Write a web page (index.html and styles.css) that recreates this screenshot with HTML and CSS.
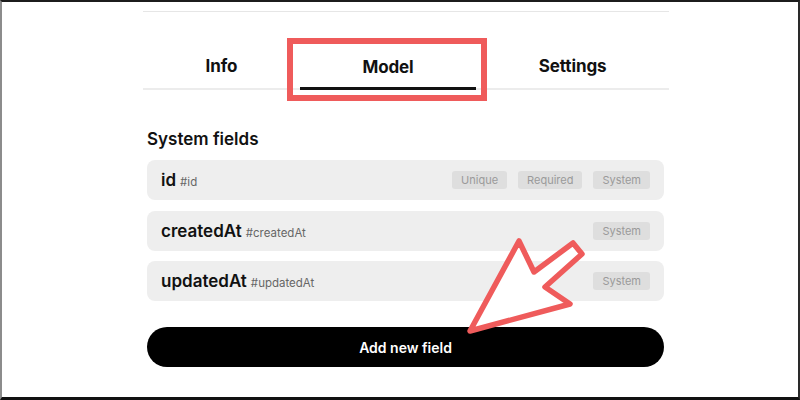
FILE: index.html
```html
<!DOCTYPE html>
<html lang="en">
<head>
<meta charset="utf-8">
<title>Model</title>
<link rel="stylesheet" href="styles.css">
</head>
<body>
<div class="frame">
  <div class="panel">
    <div class="rule"></div>
    <nav class="tabs">
      <div class="tab">Info</div>
      <div class="tab active">Model</div>
      <div class="tab">Settings</div>
    </nav>
    <section class="fields">
      <h2 class="heading">System fields</h2>
      <div class="list">
        <div class="row">
          <span class="name">id</span><span class="hash">#id</span>
          <div class="tags"><span class="tag">Unique</span><span class="tag">Required</span><span class="tag">System</span></div>
        </div>
        <div class="row">
          <span class="name">createdAt</span><span class="hash">#createdAt</span>
          <div class="tags"><span class="tag">System</span></div>
        </div>
        <div class="row">
          <span class="name">updatedAt</span><span class="hash">#updatedAt</span>
          <div class="tags"><span class="tag">System</span></div>
        </div>
      </div>
      <button class="add">Add new field</button>
    </section>
  </div>
  <div class="highlight"></div>
  <svg class="arrow" width="800" height="400" viewBox="0 0 800 400">
    <polygon points="470,331 519,241 534,272 573,243 582,254 545,287 570,304" fill="#ffffff" stroke="#ef5b5b" stroke-width="5.5" stroke-linejoin="round"/>
  </svg>
</div>
</body>
</html>
```
FILE: styles.css
```css
* { box-sizing: border-box; }
html, body { margin: 0; padding: 0; background: #fff; }
body { font-family: Inter, "Noto Sans", sans-serif; color: #111; }

.frame {
  position: relative;
  width: 800px;
  height: 400px;
  overflow: hidden;
  border-top: 2px solid #1c1c1c;
  border-left: 2px solid #8c8c8c;
  border-right: 2px solid #2a2a2a;
  border-bottom: 3px solid #111;
  padding-left: 141px;
  padding-top: 9px;
}

.panel { width: 526px; }

.rule { height: 1px; background: #e6e6e6; }

.tabs {
  display: flex;
  height: 78px;
  border-bottom: 2px solid #ececec;
}
.tab {
  flex: 1 1 auto;
  display: flex;
  align-items: center;
  justify-content: center;
  padding-top: 32px;
  font-size: 17px;
  font-weight: 700;
  color: #111;
  letter-spacing: -0.1px;
}
.tab.active { box-shadow: inset 0 -3px 0 #111; margin-bottom: -2px; }

.fields { padding: 0 5px 0 4px; }

.heading {
  margin: 37px 0 9px;
  font-size: 17px;
  line-height: 24px;
  font-weight: 600;
  color: #111;
}

.list { display: flex; flex-direction: column; gap: 10.5px; }

.row {
  display: flex;
  align-items: baseline;
  height: 40px;
  padding: 0 14px;
  line-height: 40px;
  background: #eeeeee;
  border-radius: 8px;
}
.name { font-size: 17px; font-weight: 600; color: #111; }
.hash { font-size: 11.5px; color: #666; margin-left: 4px; }
.tags { margin-left: auto; display: flex; gap: 11px; align-self: center; line-height: 18px; }
.tag {
  height: 18px;
  line-height: 18px;
  padding: 0 9px;
  font-size: 11px;
  color: #9a9a9a;
  background: #dedede;
  border-radius: 3px;
}

.add {
  display: block;
  width: 100%;
  height: 40px;
  margin-top: 26px;
  border: none;
  border-radius: 20px;
  background: #000;
  color: #fff;
  font-family: Inter, "Noto Sans", sans-serif;
  font-size: 14px;
  font-weight: 600;
}

.highlight {
  position: absolute;
  left: 285px;
  top: 36px;
  width: 200px;
  height: 63px;
  border: 6px solid #ef5b5b;
}

.arrow {
  position: absolute;
  left: -2px;
  top: -2px;
  pointer-events: none;
}
```
